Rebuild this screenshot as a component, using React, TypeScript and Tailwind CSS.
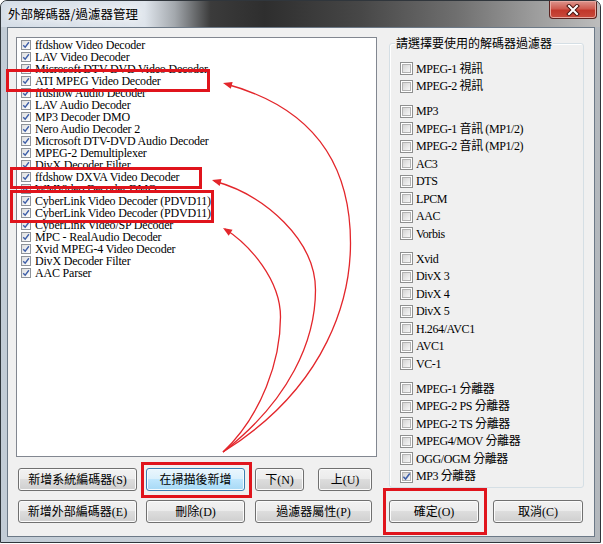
const decoders = [
  "ffdshow Video Decoder",
  "LAV Video Decoder",
  "Microsoft DTV-DVD Video Decoder",
  "ATI MPEG Video Decoder",
  "ffdshow Audio Decoder",
  "LAV Audio Decoder",
  "MP3 Decoder DMO",
  "Nero Audio Decoder 2",
  "Microsoft DTV-DVD Audio Decoder",
  "MPEG-2 Demultiplexer",
  "DivX Decoder Filter",
  "ffdshow DXVA Video Decoder",
  "WMVideo Decoder DMO",
  "CyberLink Video Decoder (PDVD11)",
  "CyberLink Video Decoder (PDVD11)",
  "CyberLink Video/SP Decoder",
  "MPC - RealAudio Decoder",
  "Xvid MPEG-4 Video Decoder",
  "DivX Decoder Filter",
  "AAC Parser",
];

interface FilterOpt {
  label: string;
  checked?: boolean;
}

const filterGroups: FilterOpt[][] = [
  [{ label: "MPEG-1 視訊" }, { label: "MPEG-2 視訊" }],
  [
    { label: "MP3" },
    { label: "MPEG-1 音訊 (MP1/2)" },
    { label: "MPEG-2 音訊 (MP1/2)" },
    { label: "AC3" },
    { label: "DTS" },
    { label: "LPCM" },
    { label: "AAC" },
    { label: "Vorbis" },
  ],
  [
    { label: "Xvid" },
    { label: "DivX 3" },
    { label: "DivX 4" },
    { label: "DivX 5" },
    { label: "H.264/AVC1" },
    { label: "AVC1" },
    { label: "VC-1" },
  ],
  [
    { label: "MPEG-1 分離器" },
    { label: "MPEG-2 PS 分離器" },
    { label: "MPEG-2 TS 分離器" },
    { label: "MPEG4/MOV 分離器" },
    { label: "OGG/OGM 分離器" },
    { label: "MP3 分離器", checked: true },
  ],
];

const serif = "font-['Liberation_Serif','Noto_Sans_CJK_TC',serif]";
const sans = "font-['Noto_Sans_CJK_TC','Liberation_Sans',sans-serif]";

function CheckMark({ size }: { size: number }) {
  return (
    <svg width={size} height={size} viewBox="0 0 10 10" className="overflow-visible">
      <path d="M1.5 5.2 L4 7.8 L8.6 1.6" fill="none" stroke="#3f5fa8" strokeWidth="1.7" />
    </svg>
  );
}

function ListCheck() {
  return (
    <span className="flex h-[10px] w-[10px] shrink-0 items-center justify-center border border-[#8f9399] bg-[linear-gradient(135deg,#dedede,#ffffff)]">
      <CheckMark size={8} />
    </span>
  );
}

function Box({ checked }: { checked?: boolean }) {
  return (
    <span className="relative flex h-[13px] w-[13px] shrink-0 items-center justify-center border border-[#8e8f8f] bg-white">
      <span className="h-[9px] w-[9px] border border-[#b2b2b2] bg-[linear-gradient(135deg,#d4d4d4,#f7f7f7)]" />
      {checked && (
        <span className="absolute inset-0 flex items-center justify-center">
          <CheckMark size={9} />
        </span>
      )}
    </span>
  );
}

function Btn({ label, className, focus }: { label: string; className: string; focus?: boolean }) {
  return (
    <div
      className={
        "flex h-[23px] shrink-0 items-center justify-center rounded-[3px] border text-[12px] leading-[14px] text-black " +
        serif +
        " " +
        className +
        (focus
          ? " border-[#3c7fb1] bg-[linear-gradient(to_bottom,#eaf6fd_0%,#d9f0fc_50%,#bee6fd_50%,#a7d9f5_100%)] shadow-[inset_0_0_0_1px_#f4fbff]"
          : " border-[#707070] bg-[linear-gradient(to_bottom,#f2f2f2_0%,#ebebeb_50%,#dddddd_50%,#cfcfcf_100%)] shadow-[inset_0_0_0_1px_#fbfbfb]")
      }
    >
      {label}
    </div>
  );
}

function head(tx: number, ty: number, cx: number, cy: number) {
  const dx = tx - cx;
  const dy = ty - cy;
  const d = Math.hypot(dx, dy);
  const ux = dx / d;
  const uy = dy / d;
  const bx = tx - ux * 9;
  const by = ty - uy * 9;
  return `${tx},${ty} ${bx - uy * 3.6},${by + ux * 3.6} ${bx + uy * 3.6},${by - ux * 3.6}`;
}

function Annotations() {
  return (
    <svg width="603" height="544" className="pointer-events-none absolute inset-0">
      <g fill="none" stroke="#e0141c" strokeWidth="3">
        <rect x="7.5" y="70.5" width="201" height="20" />
        <rect x="11.5" y="168.5" width="189" height="19" />
        <rect x="11.5" y="191.5" width="201" height="30" />
        <rect x="142.5" y="463.5" width="108" height="33" />
        <rect x="384.5" y="489.5" width="101" height="44" />
      </g>
      <g fill="none" stroke="#e3262b" strokeWidth="1.3">
        <path d="M223,452 C330,385 350.5,295 350.5,243 C350.5,165 315,108 226,84" />
        <path d="M223,452 C290,400 315.5,340 315.5,290 C315.5,240 265,195 214,181" />
        <path d="M223,452 C262,415 280.5,360 280.5,317 C280.5,280 250,245 225,229" />
      </g>
      <g fill="#e3262b">
        <polygon points={head(223, 83, 315, 108)} />
        <polygon points={head(212, 180, 265, 195)} />
        <polygon points={head(223, 228, 250, 245)} />
      </g>
    </svg>
  );
}

export default function App() {
  return (
    <div className="relative h-[544px] w-[603px] overflow-hidden bg-white">
      <div className="flex h-[543px] w-[601px] flex-col overflow-hidden rounded-t-[7px] border border-[#30363c] bg-[linear-gradient(to_right,#c2ccd6_0%,#cbd2d9_50%,#b3b8bd_100%)]">
        {/* title bar */}
        <div className="flex h-[26px] shrink-0 items-start justify-between bg-[linear-gradient(to_right,#d4dde7_0%,#dfe5ec_24%,#a3a8ad_29%,#3b3b3b_35%,#2e2e2e_44%,#474747_60%,#6f6f6f_76%,#9c9c9c_89%,#bdbdbd_100%)]">
          <div className={"pl-[7px] pt-[5px] text-[12.5px] leading-[16px] text-black [text-shadow:0_0_8px_#ffffff,0_0_12px_#ffffff] " + sans}>
            外部解碼器/過濾器管理
          </div>
          <div className="mr-[3px] flex h-[18px] w-[48px] items-center justify-center rounded-b-[4px] border border-t-0 border-[#5b2320] bg-[linear-gradient(to_bottom,#dc958d_0%,#cf5b50_45%,#c1372b_55%,#c84a3c_100%)] shadow-[inset_0_0_0_1px_#e8a8a0]">
            <svg width="14" height="12" viewBox="0 0 14 12">
              <path d="M3 2 L11 10 M11 2 L3 10" stroke="#4a1410" strokeWidth="4" strokeLinecap="square" />
              <path d="M3 2 L11 10 M11 2 L3 10" stroke="#ffffff" strokeWidth="2" strokeLinecap="square" />
            </svg>
          </div>
        </div>

        {/* client */}
        <div className="flex-1 px-[6px] pb-[5px] pr-[5px]">
          <div className="flex h-full border border-[#6c7987] bg-[#f0f0f0] pl-[8px] pt-[9px]">
            {/* left */}
            <div className="flex w-[361px] flex-col">
              <div className="h-[420px] border border-[#828790] bg-white pt-[1px]">
                {decoders.map((d, i) => (
                  <div key={i} className="flex h-[12px] items-center gap-[4px] pl-[4px]">
                    <ListCheck />
                    <span className={"whitespace-nowrap text-[12px] leading-[12px] tracking-[-0.2px] text-black " + serif}>{d}</span>
                  </div>
                ))}
              </div>
              <div className="mt-[11px] flex pl-[2px]">
                <Btn label="新增系統編碼器(S)" className="w-[119px]" />
                <Btn label="在掃描後新增" className="ml-[9px] w-[99px]" focus />
                <Btn label="下(N)" className="ml-[10px] w-[49px]" />
                <Btn label="上(U)" className="ml-[14px] w-[54px]" />
              </div>
              <div className="mt-[9px] flex pl-[2px]">
                <Btn label="新增外部編碼器(E)" className="w-[119px]" />
                <Btn label="刪除(D)" className="ml-[9px] w-[99px]" />
                <Btn label="過濾器屬性(P)" className="ml-[10px] w-[117px]" />
              </div>
            </div>

            {/* right */}
            <div className="ml-[12px] flex w-[195px] flex-col">
              <div className="relative mt-[6px] h-[445px] rounded-[3px] border border-[#d5dfe5] pl-[10px] pt-[16px] shadow-[inset_1px_1px_0_#ffffff]">
                <div className={"absolute left-[5px] top-[-9px] bg-[#f0f0f0] px-[1px] text-[12px] leading-[16px] text-black " + sans}>
                  請選擇要使用的解碼器過濾器
                </div>
                {filterGroups.map((g, gi) => (
                  <div key={gi} className={gi > 0 ? "mt-[7.5px]" : ""}>
                    {g.map((o, i) => (
                      <div key={i} className="flex h-[17.5px] items-center gap-[3px]">
                        <Box checked={o.checked} />
                        <span className={"whitespace-nowrap text-[12px] leading-[14px] tracking-[-0.4px] text-black " + serif}>{o.label}</span>
                      </div>
                    ))}
                  </div>
                ))}
              </div>
              <div className="mt-[12px] flex">
                <Btn label="確定(O)" className="w-[90px]" />
                <Btn label="取消(C)" className="ml-[14px] w-[90px]" />
              </div>
            </div>
          </div>
        </div>
      </div>
      <Annotations />
    </div>
  );
}
